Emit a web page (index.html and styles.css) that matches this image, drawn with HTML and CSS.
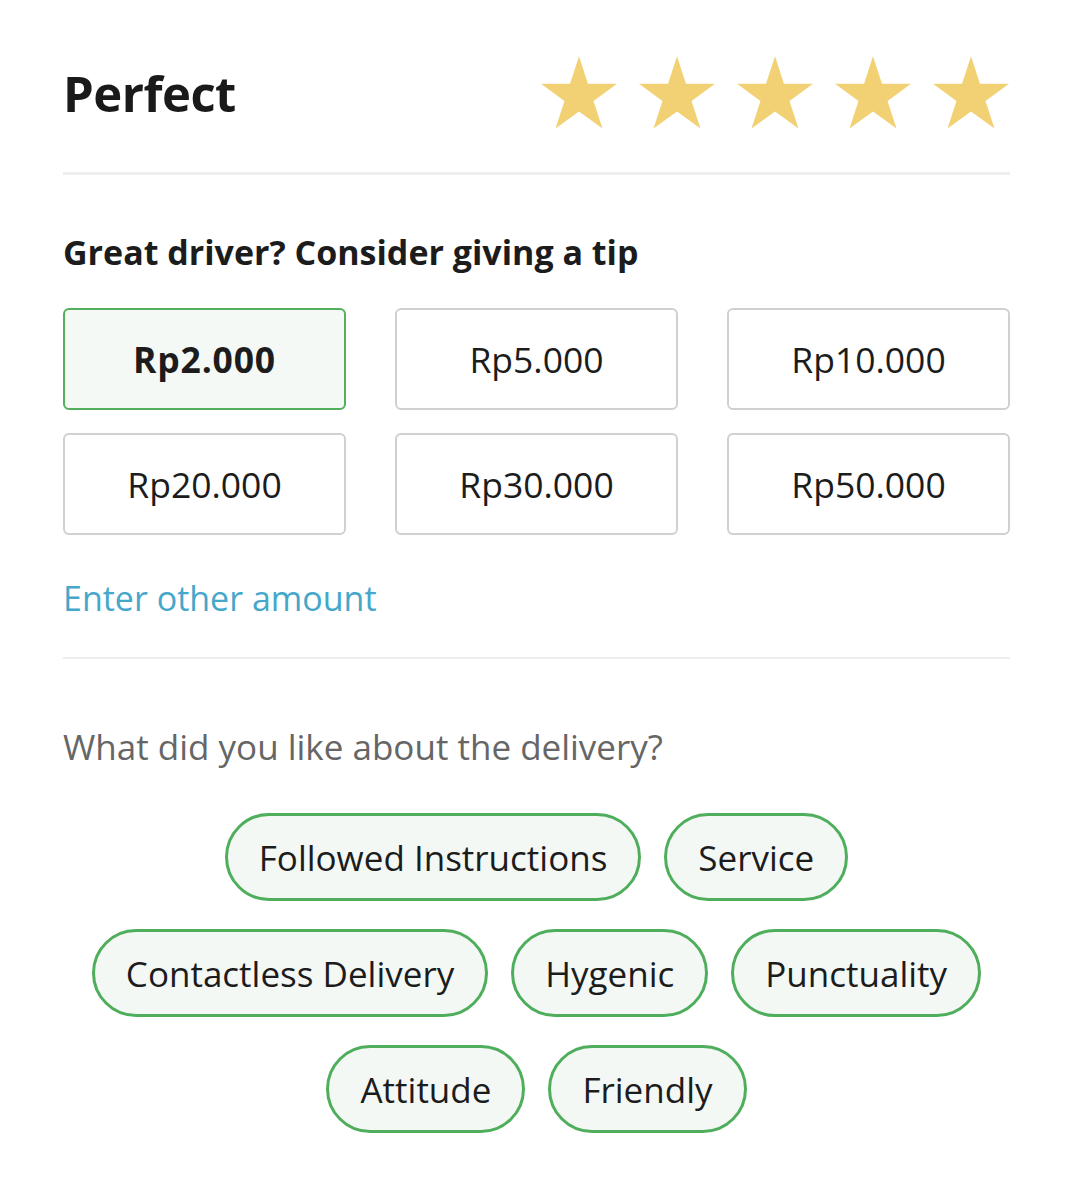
FILE: index.html
```html
<!DOCTYPE html>
<html lang="en">
<head>
<meta charset="utf-8">
<title>Rate delivery</title>
<link rel="stylesheet" href="styles.css">
</head>
<body>
<main class="page">
  <header class="rating">
    <h1 class="rating-title">Perfect</h1>
    <div class="stars">
      <svg class="star" viewBox="0 0 100 97"><polygon points="50,0 61.8,36.4 100,36.4 69.1,58.9 80.9,95.3 50,72.8 19.1,95.3 30.9,58.9 0,36.4 38.2,36.4"/></svg>
      <svg class="star" viewBox="0 0 100 97"><polygon points="50,0 61.8,36.4 100,36.4 69.1,58.9 80.9,95.3 50,72.8 19.1,95.3 30.9,58.9 0,36.4 38.2,36.4"/></svg>
      <svg class="star" viewBox="0 0 100 97"><polygon points="50,0 61.8,36.4 100,36.4 69.1,58.9 80.9,95.3 50,72.8 19.1,95.3 30.9,58.9 0,36.4 38.2,36.4"/></svg>
      <svg class="star" viewBox="0 0 100 97"><polygon points="50,0 61.8,36.4 100,36.4 69.1,58.9 80.9,95.3 50,72.8 19.1,95.3 30.9,58.9 0,36.4 38.2,36.4"/></svg>
      <svg class="star" viewBox="0 0 100 97"><polygon points="50,0 61.8,36.4 100,36.4 69.1,58.9 80.9,95.3 50,72.8 19.1,95.3 30.9,58.9 0,36.4 38.2,36.4"/></svg>
    </div>
  </header>
  <hr class="divider divider-thick">
  <section class="tip">
    <h2 class="tip-title">Great driver? Consider giving a tip</h2>
    <div class="tip-grid">
      <button class="tip-option is-selected">Rp2.000</button>
      <button class="tip-option">Rp5.000</button>
      <button class="tip-option">Rp10.000</button>
      <button class="tip-option">Rp20.000</button>
      <button class="tip-option">Rp30.000</button>
      <button class="tip-option">Rp50.000</button>
    </div>
    <a class="tip-other" href="#">Enter other amount</a>
  </section>
  <hr class="divider divider-thin">
  <section class="feedback">
    <p class="feedback-question">What did you like about the delivery?</p>
    <div class="chips">
      <span class="chip">Followed Instructions</span>
      <span class="chip">Service</span>
      <span class="chip">Contactless Delivery</span>
      <span class="chip">Hygenic</span>
      <span class="chip">Punctuality</span>
      <span class="chip">Attitude</span>
      <span class="chip">Friendly</span>
    </div>
  </section>
</main>
</body>
</html>
```
FILE: styles.css
```css
* { box-sizing: border-box; }
html, body {
  margin: 0;
  background: #ffffff;
}
body {
  font-family: "Open Sans", "Noto Sans", "Liberation Sans", sans-serif;
  color: #1c1c1c;
}
.page {
  width: 1073px;
  padding: 55px 63px 40px;
}
.rating {
  display: flex;
  align-items: center;
  justify-content: space-between;
  height: 75px;
}
.rating-title {
  margin: 0;
  font-size: 49px;
  font-weight: 700;
  line-height: 60px;
  color: #1a1a1a;
  letter-spacing: -0.5px;
}
.stars {
  display: flex;
  gap: 22px;
  margin-right: 1px;
}
.star {
  width: 76px;
  height: 74px;
  fill: #f1d173;
  display: block;
}
.divider {
  border: 0;
  margin: 0;
  background: #eeeeee;
}
.divider-thick {
  height: 3px;
  margin-top: 42px;
}
.divider-thin {
  height: 2px;
  margin-top: 39px;
}
.tip-title {
  margin: 57px 0 0;
  font-size: 34px;
  font-weight: 700;
  line-height: 40px;
  color: #1c1c1c;
}
.tip-grid {
  margin-top: 36px;
  display: grid;
  grid-template-columns: repeat(3, 1fr);
  column-gap: 49px;
  row-gap: 23px;
}
.tip-option {
  height: 102px;
  border: 2px solid #d0d0d0;
  border-radius: 6px;
  background: #ffffff;
  font-family: inherit;
  font-size: 35.5px;
  color: #1c1c1c;
  padding: 0;
}
.tip-option.is-selected {
  border-color: #52b05e;
  background: #f4f9f5;
  font-weight: 700;
  letter-spacing: 0.8px;
}
.tip-other {
  display: block;
  margin-top: 43px;
  font-size: 34px;
  line-height: 40px;
  color: #45a7ca;
  text-decoration: none;
}
.feedback-question {
  margin: 68px 0 0;
  font-size: 35px;
  line-height: 40px;
  color: #666666;
}
.chips {
  margin-top: 46px;
  display: flex;
  flex-wrap: wrap;
  justify-content: center;
  column-gap: 23px;
  row-gap: 28px;
}
.chip {
  display: inline-flex;
  align-items: center;
  height: 88px;
  padding: 0 31px;
  border: 3px solid #4fae5b;
  border-radius: 44px;
  background: #f3f8f5;
  font-size: 35px;
  color: #1c1c1c;
}
```
